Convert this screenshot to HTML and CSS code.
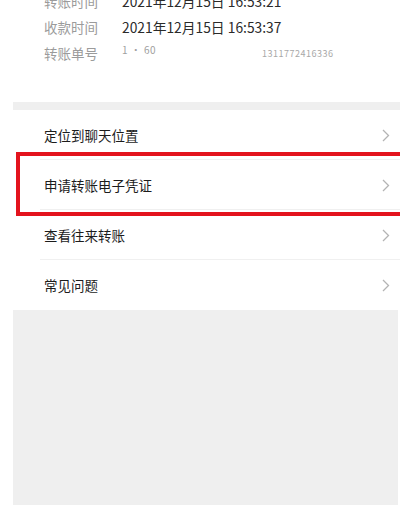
FILE: index.html
```html
<!DOCTYPE html>
<html lang="zh-CN">
<head>
<meta charset="utf-8">
<title>转账详情</title>
<link rel="stylesheet" href="styles.css">
</head>
<body>
<div class="page">
  <section class="info">
    <div class="info-row"><span class="label">转账时间</span><span class="value">2021年12月15日 16:53:21</span></div>
    <div class="info-row"><span class="label">收款时间</span><span class="value">2021年12月15日 16:53:37</span></div>
    <div class="info-row"><span class="label">转账单号</span><span class="value masked"><span class="m1">1 · 60</span><span class="m2">1311772416336</span></span></div>
  </section>
  <div class="band"></div>
  <ul class="menu">
    <li class="item"><span class="item-text">定位到聊天位置</span><svg class="chev" viewBox="0 0 8 13" width="8" height="13"><path d="M1 1 L6.5 6.5 L1 12" fill="none" stroke="#b4b4b4" stroke-width="1.3"/></svg></li>
    <li class="item highlighted"><span class="item-text">申请转账电子凭证</span><svg class="chev" viewBox="0 0 8 13" width="8" height="13"><path d="M1 1 L6.5 6.5 L1 12" fill="none" stroke="#b4b4b4" stroke-width="1.3"/></svg><span class="mark"></span></li>
    <li class="item"><span class="item-text">查看往来转账</span><svg class="chev" viewBox="0 0 8 13" width="8" height="13"><path d="M1 1 L6.5 6.5 L1 12" fill="none" stroke="#b4b4b4" stroke-width="1.3"/></svg></li>
    <li class="item"><span class="item-text">常见问题</span><svg class="chev" viewBox="0 0 8 13" width="8" height="13"><path d="M1 1 L6.5 6.5 L1 12" fill="none" stroke="#b4b4b4" stroke-width="1.3"/></svg></li>
  </ul>
  <div class="footer-area"></div>
</div>
</body>
</html>
```
FILE: styles.css
```css
html, body {
  margin: 0;
  padding: 0;
  background: #ffffff;
}
body {
  width: 400px;
  height: 508px;
  overflow: hidden;
  font-family: "Noto Sans CJK SC", "Noto Sans", sans-serif;
}
.page {
  display: flex;
  flex-direction: column;
}
.info {
  margin-top: -12px;
  padding: 0 0 36px 44px;
}
.info-row {
  display: flex;
  height: 26px;
  line-height: 26px;
  font-size: 13.5px;
}
.label {
  width: 78px;
  color: #9b9b9b;
}
.value {
  color: #2a2a2a;
  font-size: 13.8px;
}
.masked {
  position: relative;
  flex: 1;
  font-size: 9px;
  color: #c4c4c4;
  letter-spacing: 0.5px;
}
.m1 {
  position: absolute;
  left: 0;
  top: -3px;
  font-size: 10px;
  color: #a0a0a0;
}
.m2 {
  position: absolute;
  left: 140px;
  top: 1px;
  color: #a8a8a8;
}
.band {
  margin-left: 13px;
  height: 8px;
  background: #efefef;
}
.menu {
  list-style: none;
  margin: 0 0 0 13px;
  padding: 0;
  background: #ffffff;
}
.item {
  position: relative;
  display: flex;
  align-items: center;
  justify-content: space-between;
  height: 50px;
  padding: 0 10px 0 31px;
  font-size: 13.5px;
  color: #1c1c1c;
  box-sizing: border-box;
}
.item::after {
  content: "";
  position: absolute;
  left: 27px;
  right: 0;
  bottom: 0;
  height: 1px;
  background: #f0f0f0;
}
.item:last-child::after {
  display: none;
}
.item-text {
  line-height: 20px;
}
.chev {
  display: block;
}
.mark {
  position: absolute;
  left: 3px;
  top: -8px;
  bottom: -6px;
  right: -12px;
  border: 4.5px solid #e3131d;
  z-index: 1;
}
.footer-area {
  margin: 0 2px 0 13px;
  height: 195px;
  background: #efefef;
}
```
